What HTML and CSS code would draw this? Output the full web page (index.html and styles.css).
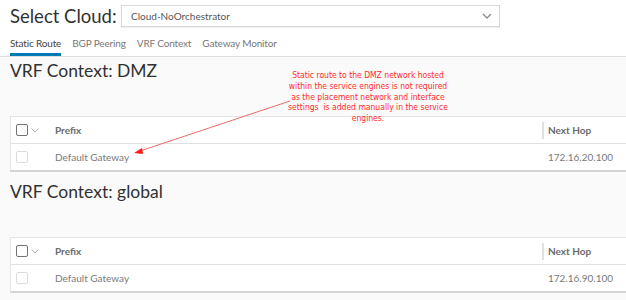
FILE: index.html
```html
<!DOCTYPE html>
<html>
<head>
<meta charset="utf-8">
<link rel="stylesheet" href="styles.css">
</head>
<body>
<header class="top">
  <div class="cloud-row">
    <h1 class="cloud-label">Select Cloud:</h1>
    <div class="select">
      <span>Cloud-NoOrchestrator</span>
      <svg class="chev" width="10" height="6" viewBox="0 0 10 6"><path d="M1 1 L5 5 L9 1" fill="none" stroke="#8a8a8a" stroke-width="1.3"/></svg>
    </div>
  </div>
  <nav class="tabs">
    <a class="tab active">Static Route</a>
    <a class="tab">BGP Peering</a>
    <a class="tab">VRF Context</a>
    <a class="tab">Gateway Monitor</a>
  </nav>
</header>
<main class="content">
  <section class="vrf first">
    <h2 class="vrf-title">VRF Context: DMZ</h2>
    <div class="grid">
      <div class="grid-head">
        <div class="cell-check"><span class="cb dark"></span><svg class="hchev" width="8" height="5" viewBox="0 0 8 5"><path d="M0.5 0.5 L4 4 L7.5 0.5" fill="none" stroke="#b0b0b0" stroke-width="1"/></svg></div>
        <div class="cell-prefix">Prefix</div>
        <div class="cell-hop"><span class="sep"></span>Next Hop</div>
      </div>
      <div class="grid-row">
        <div class="cell-check"><span class="cb"></span></div>
        <div class="cell-prefix">Default Gateway</div>
        <div class="cell-hop">172.16.20.100</div>
      </div>
    </div>
  </section>
  <section class="vrf second">
    <h2 class="vrf-title">VRF Context: global</h2>
    <div class="grid">
      <div class="grid-head">
        <div class="cell-check"><span class="cb dark"></span><svg class="hchev" width="8" height="5" viewBox="0 0 8 5"><path d="M0.5 0.5 L4 4 L7.5 0.5" fill="none" stroke="#b0b0b0" stroke-width="1"/></svg></div>
        <div class="cell-prefix">Prefix</div>
        <div class="cell-hop"><span class="sep"></span>Next Hop</div>
      </div>
      <div class="grid-row">
        <div class="cell-check"><span class="cb"></span></div>
        <div class="cell-prefix">Default Gateway</div>
        <div class="cell-hop">172.16.90.100</div>
      </div>
    </div>
  </section>
</main>
<div class="note">Static route to the DMZ network hosted<br>within the service engines is not required<br>as the placement network and interface<br>settings&nbsp; is added manually in the service<br>engines.</div>
<svg class="arrow" width="626" height="300" viewBox="0 0 626 300">
  <line x1="290" y1="101" x2="140" y2="151" stroke="#f26d6d" stroke-width="1"/>
  <polygon points="134,153 142,148 143,154" fill="#ff1a1a"/>
</svg>
</body>
</html>
```

FILE: styles.css
```css
html, body {
  margin: 0;
  padding: 0;
}
body {
  width: 626px;
  height: 300px;
  overflow: hidden;
  background: #fafafa;
  font-family: Lato, "Open Sans", sans-serif;
  color: #333;
  position: relative;
}
.top {
  background: #fff;
  border-bottom: 1px solid #dedede;
  height: 57px;
  box-sizing: border-box;
  padding: 5px 0 0 10px;
}
.cloud-row {
  display: flex;
  align-items: center;
  height: 22px;
}
.cloud-label {
  margin: 0;
  width: 111px;
  font-size: 18.5px;
  font-weight: 400;
  color: #313131;
  line-height: 22px;
}
.select {
  width: 379px;
  height: 22px;
  box-sizing: border-box;
  border: 1px solid #d7d7d7;
  box-shadow: 0 1px 1px rgba(0,0,0,0.06);
  display: flex;
  align-items: center;
  justify-content: space-between;
  padding: 0 7px 0 9px;
  font-size: 10px;
  color: #565656;
}
.chev {
  display: block;
}
.tabs {
  display: flex;
  gap: 11px;
  height: 29px;
  align-items: flex-end;
}
.tab {
  font-size: 10px;
  letter-spacing: -0.15px;
  line-height: 14px;
  color: #777;
  padding-bottom: 3px;
  border-bottom: 3px solid transparent;
}
.tab.active {
  color: #444;
  border-bottom-color: #0079b8;
}
.content {
  display: flex;
  flex-direction: column;
  padding-left: 10px;
}
.vrf-title {
  margin: 0;
  font-size: 17.5px;
  font-weight: 400;
  line-height: 22px;
  color: #313131;
}
.first .vrf-title {
  margin-top: 3px;
}
.second .vrf-title {
  margin-top: 9px;
}
.grid {
  margin-top: 34px;
  background: #fff;
  border: 1px solid #e4e4e4;
  border-right: none;
  border-bottom: 2px solid #d4d4d4;
}
.grid-head, .grid-row {
  display: flex;
  align-items: center;
  height: 26px;
  font-size: 10px;
}
.grid-head {
  border-bottom: 1px solid #e0e0e0;
  color: #6a6a6a;
  font-weight: 700;
}
.grid-row {
  color: #7a7a7a;
}
.cell-check {
  width: 44px;
  padding-left: 5px;
  box-sizing: border-box;
  display: flex;
  align-items: center;
  gap: 3px;
}
.cb {
  width: 12px;
  height: 12px;
  box-sizing: border-box;
  border: 1px solid #dcdcdc;
  border-radius: 2px;
  background: #fff;
}
.cb.dark {
  border-color: #737373;
}
.cell-prefix {
  width: 487px;
}
.cell-hop {
  display: flex;
  align-items: center;
  gap: 4px;
}
.grid-row .cell-hop {
  padding-left: 6px;
}
.sep {
  width: 2px;
  height: 17px;
  background: #e0e0e0;
}
.note {
  position: absolute;
  left: 268px;
  top: 70px;
  width: 200px;
  text-align: center;
  color: #ff2b2b;
  font-family: "Liberation Sans Narrow", "DejaVu Sans Condensed", "Liberation Sans", sans-serif;
  font-size: 8.5px;
  line-height: 10.75px;
}
.arrow {
  position: absolute;
  left: 0;
  top: 0;
  pointer-events: none;
}
```
